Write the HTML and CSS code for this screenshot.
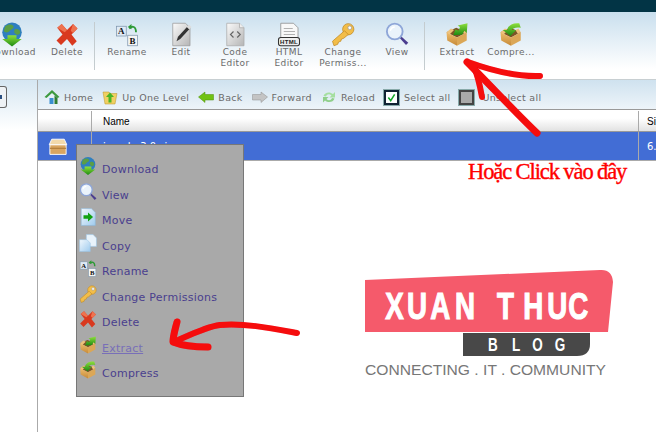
FILE: index.html
```html
<!DOCTYPE html>
<html>
<head>
<title>File Manager</title>
<link rel="stylesheet" href="styles.css">
</head>
<body>

<svg class="defs" width="0" height="0">
 <defs>
  <linearGradient id="gGreen" x1="0" y1="0" x2="0" y2="1"><stop offset="0" stop-color="#8fe03c"/><stop offset="1" stop-color="#1c8a12"/></linearGradient>
  <linearGradient id="gPaper" x1="0" y1="0" x2="1" y2="1"><stop offset="0" stop-color="#fafafa"/><stop offset="1" stop-color="#b5b5b5"/></linearGradient>
  <linearGradient id="gBox" x1="0" y1="0" x2="0" y2="1"><stop offset="0" stop-color="#eebc6c"/><stop offset="1" stop-color="#c68a38"/></linearGradient>
  <linearGradient id="gBlue" x1="0" y1="0" x2="1" y2="1"><stop offset="0" stop-color="#f2f8fd"/><stop offset="1" stop-color="#9fcbee"/></linearGradient>
  <filter id="soft" x="-10%" y="-10%" width="120%" height="120%"><feGaussianBlur stdDeviation="0.6"/></filter>
  <symbol id="i-globe" viewBox="0 0 32 32">
   <circle cx="16" cy="13" r="13" fill="#2f7fc0"/>
   <path d="M7 5c4-3 9-3 11 0 1 3-3 4-5 6-2 3-7 3-8 0zM20 9c3-1 6 0 7 3 0 4-3 5-5 4-3-1-4-5-2-7z" fill="#5b9e45"/>
   <path d="M10 17h12v5h7L16 32 3 22h7z" fill="url(#gGreen)"/>
  </symbol>
  <symbol id="i-delete" viewBox="0 0 32 32">
   <path d="M3 7l6-5 7 8 8-8 6 6-8 8 7 9-6 6-7-9-8 8-6-6 8-8z" fill="#d9391f"/>
   <path d="M3 7l6-5 7 8-3 3zM24 2l6 6-6 6-3-3z" fill="#ee7350"/>
  </symbol>
  <symbol id="i-rename" viewBox="0 0 32 32">
   <rect x="2" y="5" width="13" height="13" fill="#dfeaf5" stroke="#7d95ad"/>
   <rect x="17" y="17" width="13" height="14" fill="#f5f5f5" stroke="#7d95ad"/>
   <path d="M19 8c4-4 9-3 9 5" fill="none" stroke="#2d9a36" stroke-width="2.5"/>
   <path d="M17 6l5-4v7z" fill="#2d9a36"/>
   <text x="8.5" y="15.5" class="icon-letter">A</text>
   <text x="23.5" y="28" class="icon-letter">B</text>
  </symbol>
  <symbol id="i-edit" viewBox="0 0 32 32">
   <path d="M5 1h17l6 6v24H5z" fill="url(#gPaper)" stroke="#999"/>
   <path d="M10 25l2-6L24 6l3 3-12 13z" fill="#333"/>
   <path d="M24 6l3-3 3 3-3 3z" fill="#ddd"/>
  </symbol>
  <symbol id="i-code" viewBox="0 0 32 32">
   <path d="M5 1h17l6 6v24H5z" fill="url(#gPaper)" stroke="#aaa"/>
   <path d="M22 1v6h6" fill="#eee" stroke="#aaa"/>
   <path d="M14 12l-4 4 4 4M19 12l4 4-4 4" fill="none" stroke="#666" stroke-width="1.6"/>
  </symbol>
  <symbol id="i-html" viewBox="0 0 32 32">
   <path d="M5 1h17l6 6v16H5z" fill="#f8f8f8" stroke="#888"/>
   <path d="M9 8h12M9 12h15M9 16h15" stroke="#999"/>
   <rect x="2" y="20" width="28" height="11" rx="3" fill="#eee" stroke="#333" stroke-width="1.4"/>
   <text x="16" y="29" class="icon-html">HTML</text>
  </symbol>
  <symbol id="i-key" viewBox="0 0 32 32">
   <circle cx="23" cy="9" r="7.5" fill="#f2bd49" stroke="#c08a24"/>
   <circle cx="25" cy="7" r="2.5" fill="#fff" stroke="#999"/>
   <path d="M18 11L2 25l2 6 5-2 1-3 3-1 1-3 3-1 6-5z" fill="#f2bd49" stroke="#c08a24"/>
  </symbol>
  <symbol id="i-view" viewBox="0 0 32 32">
   <path d="M19 20l9 10 3-3-10-9z" fill="#4b3d8f"/>
   <circle cx="13" cy="12" r="10.5" fill="#eaf3fb" stroke="#8ea6d8" stroke-width="2.5"/>
   <path d="M7 11c1-3 3-5 6-5" fill="none" stroke="#fff" stroke-width="2"/>
  </symbol>
  <symbol id="i-extract" viewBox="0 0 32 32">
   <path d="M2 13L15 7l14 6-13 7z" fill="#7a5526"/>
   <path d="M2 13l14 7v11L3 24z" fill="url(#gBox)"/>
   <path d="M29 13l-13 7v11l13-7z" fill="#dba757"/>
   <path d="M2 13l6-5 4 2-6 6zM29 13l-3-5-4 2 3 5z" fill="#eec27c"/>
   <path d="M11 17l3-8 4 2 2-5-3-2 13-3-1 13-3-3-3 5z" fill="url(#gGreen)"/>
  </symbol>
  <symbol id="i-compress" viewBox="0 0 32 32">
   <path d="M2 13L15 7l14 6-13 7z" fill="#7a5526"/>
   <path d="M2 13l14 7v11L3 24z" fill="url(#gBox)"/>
   <path d="M29 13l-13 7v11l13-7z" fill="#dba757"/>
   <path d="M2 13l6-5 4 2-6 6zM29 13l-3-5-4 2 3 5z" fill="#eec27c"/>
   <path d="M15 18L5 10h6c1-6 7-10 16-9l2 6c-6-1-10 0-12 3h6z" fill="url(#gGreen)"/>
  </symbol>
  <symbol id="i-move" viewBox="0 0 32 32">
   <path d="M4 1h18l7 7v23H4z" fill="url(#gBlue)" stroke="#8db7da"/>
   <path d="M8 13h8V8l9 8-9 8v-5H8z" fill="#12a312"/>
  </symbol>
  <symbol id="i-copy" viewBox="0 0 32 32">
   <path d="M13 1h12l6 6v15H13z" fill="#e9f3fb" stroke="#9cc4e4"/>
   <path d="M1 10h13l6 6v15H1z" fill="url(#gBlue)" stroke="#9cc4e4"/>
  </symbol>
  <symbol id="i-home" viewBox="0 0 32 32">
   <path d="M3 16L16 4l13 12v14H3z" fill="#e6f0f8"/>
   <path d="M1 16L16 2l15 14-4 2L16 8 5 18z" fill="#3d9a3f"/>
   <path d="M27 18v12h-6V13z" fill="#2f7d34"/>
   <rect x="11" y="18" width="8" height="12" fill="#3a8fd0"/>
  </symbol>
  <symbol id="i-up" viewBox="0 0 32 32">
   <path d="M2 6h12l2 3h14l-4 21H6z" fill="#f0cf62" stroke="#b89428"/>
   <path d="M16 7l8 9h-5v11h-6V16H8z" fill="#49b526"/>
  </symbol>
  <symbol id="i-back" viewBox="0 0 32 32">
   <path d="M1 16L14 6v5h17v11H14v5z" fill="#71c213" stroke="#4c8f0b"/>
  </symbol>
  <symbol id="i-forward" viewBox="0 0 32 32">
   <path d="M31 16L18 6v5H1v11h17v5z" fill="#c4c4c4" stroke="#8f8f8f"/>
  </symbol>
  <symbol id="i-reload" viewBox="0 0 32 32">
   <path d="M5 14C7 7 17 4 24 10l4-4v11H17l4-4c-4-4-9-3-11 2z" fill="#a5dfa0"/>
   <path d="M27 19c-2 7-12 10-19 4l-4 4V16h11l-4 4c4 4 9 3 11-2z" fill="#8fcf8a"/>
  </symbol>
  <symbol id="i-file" viewBox="0 0 32 28" preserveAspectRatio="none">
   <path d="M3 11h26v16H3z" fill="#d9a560" stroke="#fff" stroke-width="1.5"/>
   <path d="M6 2h20l4 9H2z" fill="#f2d9ab" stroke="#fff" stroke-width="1.5"/>
   <path d="M3 17h26" stroke="#b37f3c" stroke-width="2"/>
  </symbol>
 </defs>
</svg>

<div class="top-bar"></div>

<div class="toolbar">
 <div class="tool tool-first"><svg class="tool-icon"><use href="#i-globe"/></svg><span>Download</span></div>
 <div class="tool"><svg class="tool-icon"><use href="#i-delete"/></svg><span>Delete</span></div>
 <div class="tool-sep"></div>
 <div class="tool"><svg class="tool-icon"><use href="#i-rename"/></svg><span>Rename</span></div>
 <div class="tool"><svg class="tool-icon"><use href="#i-edit"/></svg><span>Edit</span></div>
 <div class="tool"><svg class="tool-icon"><use href="#i-code"/></svg><span>Code<br>Editor</span></div>
 <div class="tool"><svg class="tool-icon"><use href="#i-html"/></svg><span>HTML<br>Editor</span></div>
 <div class="tool"><svg class="tool-icon"><use href="#i-key"/></svg><span>Change<br>Permiss...</span></div>
 <div class="tool"><svg class="tool-icon"><use href="#i-view"/></svg><span>View</span></div>
 <div class="tool-sep"></div>
 <div class="tool"><svg class="tool-icon"><use href="#i-extract"/></svg><span>Extract</span></div>
 <div class="tool"><svg class="tool-icon"><use href="#i-compress"/></svg><span>Compre...</span></div>
</div>

<div class="workspace">
 <div class="sidebar">
  <div class="side-button"><span class="side-dot"></span></div>
 </div>
 <div class="main">
  <div class="navbar">
   <div class="nav-item"><svg class="nav-icon"><use href="#i-home"/></svg>Home</div>
   <div class="nav-item"><svg class="nav-icon"><use href="#i-up"/></svg>Up One Level</div>
   <div class="nav-item"><svg class="nav-icon"><use href="#i-back"/></svg>Back</div>
   <div class="nav-item"><svg class="nav-icon"><use href="#i-forward"/></svg>Forward</div>
   <div class="nav-item"><svg class="nav-icon"><use href="#i-reload"/></svg>Reload</div>
   <div class="nav-item"><span class="check"><svg viewBox="0 0 14 14"><path d="M3 7l3 4 5-8" fill="none" stroke="#16a82a" stroke-width="2"/></svg></span>Select all</div>
   <div class="nav-item"><span class="check check-empty"></span>Unselect all</div>
  </div>
  <div class="file-head">
   <div class="col-icon"></div>
   <div class="col-name">Name</div>
   <div class="col-size">Size</div>
  </div>
  <div class="file-row">
   <div class="col-icon"><svg class="file-icon"><use href="#i-file"/></svg></div>
   <div class="col-name">joomla-3.0.zip</div>
   <div class="col-size">6.5 MB</div>
  </div>
 </div>
</div>

<div class="context-menu">
 <div class="menu-item"><svg class="menu-icon"><use href="#i-globe"/></svg>Download</div>
 <div class="menu-item"><svg class="menu-icon"><use href="#i-view"/></svg>View</div>
 <div class="menu-item"><svg class="menu-icon"><use href="#i-move"/></svg>Move</div>
 <div class="menu-item"><svg class="menu-icon"><use href="#i-copy"/></svg>Copy</div>
 <div class="menu-item"><svg class="menu-icon"><use href="#i-rename"/></svg>Rename</div>
 <div class="menu-item"><svg class="menu-icon"><use href="#i-key"/></svg>Change Permissions</div>
 <div class="menu-item"><svg class="menu-icon"><use href="#i-delete"/></svg>Delete</div>
 <div class="menu-item menu-active"><svg class="menu-icon"><use href="#i-extract"/></svg><u>Extract</u></div>
 <div class="menu-item"><svg class="menu-icon"><use href="#i-compress"/></svg>Compress</div>
</div>

<svg class="annotations" viewBox="0 0 656 432">
 <g fill="none" stroke="#f5080c" stroke-linecap="round" stroke-linejoin="round" filter="url(#soft)">
  <path d="M468 62C490 70 515 77 540 76" stroke-width="6"/>
  <path d="M467 62C490 85 515 112 537 133" stroke-width="7"/>
  <path d="M474 68C478 75 480 86 482 97" stroke-width="6"/>
  <path d="M297 333C270 328 245 323 220 325C205 327 190 335 174 342" stroke-width="6"/>
  <path d="M177 322C175 330 173 336 173 342C183 346 195 347 208 347" stroke-width="7"/>
 </g>
</svg>

<div class="note">Hoặc Click vào đây</div>

<svg class="logo" viewBox="0 0 250 122">
 <path d="M0 20L235 10Q247 9 248 22L243 72H0z" fill="#f55a6b"/>
 <path d="M98 73H225V84Q225 96 212 96H98z" fill="#484848"/>
 <g transform="scale(0.75 1)">
  <text x="27 56 87 120 0 176 211 243 271" y="59" class="logo-title">XUAN THUC</text>
  <text x="164 196 223 253" y="91" class="logo-blog">BLOG</text>
 </g>
 <text x="0" y="115" textLength="241" lengthAdjust="spacingAndGlyphs" class="logo-tag">CONNECTING . IT . COMMUNITY</text>
</svg>

</body>
</html>
```

FILE: styles.css
```css
html, body { margin: 0; padding: 0; }
body {
 width: 656px;
 height: 432px;
 overflow: hidden;
 position: relative;
 background: #fff;
 font-family: "DejaVu Sans", Verdana, sans-serif;
}
.defs { position: absolute; }
.icon-letter { font: bold 12px "Liberation Serif", serif; text-anchor: middle; fill: #111; }
.icon-html { font: bold 8px "Liberation Sans", sans-serif; text-anchor: middle; fill: #222; }

.top-bar { height: 12px; background: #023445; }

.toolbar {
 height: 68px;
 display: flex;
 background: linear-gradient(#c9dfee, #e6f0f7 45%, #fff 85%);
 border-bottom: 1px solid #c8cfd2;
 box-sizing: border-box;
}
.tool {
 width: 54px;
 flex: none;
 display: flex;
 flex-direction: column;
 align-items: center;
 padding-top: 10px;
 font-size: 9px;
 line-height: 11px;
 color: #6b6b6b;
 text-align: center;
 letter-spacing: 0.4px;
}
.tool-first { margin-left: -15px; margin-right: 1px; }
.tool-icon { width: 24px; height: 25px; }
.tool-sep { width: 1px; height: 48px; margin: 10px 5px 0 0; background: #c4cccf; flex: none; }

.workspace { display: flex; height: 352px; }
.sidebar {
 width: 37px;
 flex: none;
 background: linear-gradient(#d5e6f2, #fff 50px);
 padding-top: 6px;
 box-sizing: border-box;
}
.side-button {
 width: 6px;
 height: 20px;
 background: #eef2f5;
 border: 1px solid #666;
 border-left: 0;
 border-radius: 0 3px 3px 0;
 display: flex;
 align-items: center;
}
.side-dot { width: 2px; height: 4px; background: #2a4f80; }
.main { flex: 1; border-left: 1px solid #aaa; min-width: 0; }

.navbar {
 height: 29px;
 display: flex;
 align-items: center;
 padding: 5px 0 0 6px;
 gap: 9px;
 background: linear-gradient(#cfe2ef, #edf4f9);
 font-size: 9.5px;
 color: #6b6b6b;
 box-sizing: border-box;
 letter-spacing: 0.3px;
}
.nav-item { display: flex; align-items: center; gap: 4px; white-space: nowrap; }
.nav-icon { width: 16px; height: 16px; }
.check {
 width: 11px;
 height: 11px;
 margin-right: 1px;
 border: 2px solid #123;
 outline: 1px solid #8aa;
 background: #fff;
}
.check svg { display: block; width: 11px; height: 11px; }
.check-empty { background: #a9a9a9; border-color: #444; margin-right: 4px; }

.file-head, .file-row { display: flex; font-size: 10px; }
.file-head {
 height: 22px;
 align-items: center;
 padding-top: 1px;
 border-top: 1px solid #999;
 background: linear-gradient(#fff 40%, #e2e2e2);
 color: #000;
 font-family: "Liberation Sans", Arial, sans-serif;
 box-sizing: border-box;
}
.file-row {
 height: 28px;
 align-items: center;
 border-top: 1px solid #999;
 border-bottom: 1px solid #aaa;
 background: #426dd5;
 color: #fff;
}
.col-icon { width: 54px; flex: none; align-self: stretch; display: flex; align-items: center; padding-left: 10px; box-sizing: border-box; border-right: 1px solid #aaa; }
.col-name { flex: 1; padding-left: 11px; }
.col-size { width: 9px; flex: none; align-self: stretch; display: flex; align-items: center; padding-left: 8px; border-left: 1px solid #aaa; white-space: nowrap; overflow: hidden; }
.file-icon { width: 20px; height: 17px; }

.context-menu {
 position: absolute;
 left: 76px;
 top: 144px;
 width: 168px;
 height: 253px;
 padding-top: 12px;
 box-sizing: border-box;
 background: #a9a9a9;
 border: 1px solid #777;
 font-size: 11px;
 letter-spacing: 0.25px;
 color: #4a3f8e;
}
.menu-item { height: 25.5px; display: flex; align-items: center; padding-left: 25px; position: relative; }
.menu-icon { position: absolute; left: 2px; top: 0; width: 18px; height: 18px; }
.menu-active { color: #786fb8; }

.annotations { position: absolute; left: 0; top: 0; width: 656px; height: 432px; pointer-events: none; }
.note {
 position: absolute;
 left: 468px;
 top: 159px;
 font: 22.5px "Liberation Serif", serif;
 color: #f00;
 letter-spacing: -1.1px;
 white-space: nowrap;
 -webkit-text-stroke: 0.4px #f00;
}

.logo { position: absolute; left: 365px; top: 260px; width: 250px; height: 122px; overflow: visible; }
.logo-title { font: bold 37px "Liberation Sans", sans-serif; fill: #fff; stroke: #fff; stroke-width: 1.1px; }
.logo-blog { font: bold 18px "Liberation Sans", sans-serif; fill: #fff; }
.logo-tag { font: 15.4px "Liberation Sans", sans-serif; fill: #777; }
```
